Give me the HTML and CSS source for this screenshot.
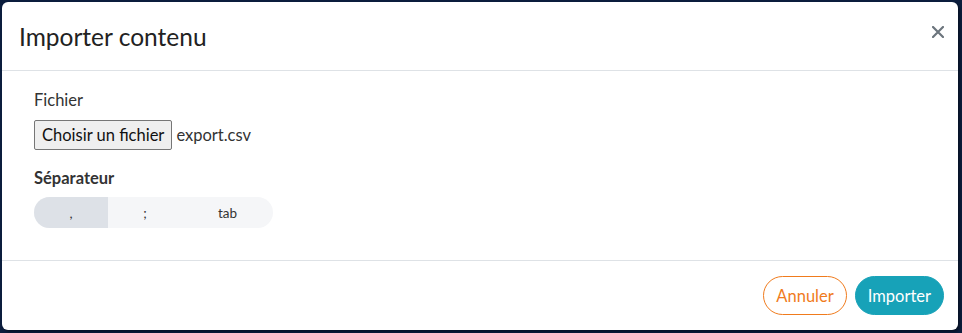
FILE: index.html
```html
<!DOCTYPE html>
<html lang="fr">
<head>
    <meta charset="UTF-8">
    <meta name="viewport" content="width=device-width, initial-scale=1.0">
    <title>Importer contenu</title>
    <link rel="stylesheet" href="styles.css">
</head>
<body>
    <div class="backdrop">
        <div class="modal">
            <div class="modal-header">
                <h2>Importer contenu</h2>
                <button type="button" class="close" aria-label="Fermer">
                    <svg width="12" height="12" viewBox="0 0 12 12">
                        <path d="M1 1 L11 11 M11 1 L1 11" stroke="#6c757d" stroke-width="2.2" stroke-linecap="round"/>
                    </svg>
                </button>
            </div>
            <div class="modal-body">
                <label class="field-label">Fichier</label>
                <div class="file-row">
                    <span class="file-button">Choisir un fichier</span>
                    <span class="file-name">export.csv</span>
                </div>
                <div class="section-label">Séparateur</div>
                <div class="segments">
                    <button type="button" class="segment active">,</button>
                    <button type="button" class="segment">;</button>
                    <button type="button" class="segment wide">tab</button>
                </div>
            </div>
            <div class="modal-footer">
                <button type="button" class="btn btn-outline">Annuler</button>
                <button type="button" class="btn btn-primary">Importer</button>
            </div>
        </div>
    </div>
</body>
</html>
```

FILE: styles.css
```css
body {
    margin: 0;
    padding: 0;
    font-family: "Lato", "Open Sans", sans-serif;
    background-color: #0b1d3d;
    color: #333;
}

.backdrop {
    padding: 2px 4px 3px 2px;
}

.modal {
    background-color: white;
    border-radius: 6px;
    display: flex;
    flex-direction: column;
    box-shadow: 2px 2px 3px rgba(0, 0, 0, 0.4);
}

.modal-header {
    display: flex;
    justify-content: space-between;
    align-items: center;
    height: 68px;
    padding: 0 14px 0 17px;
    border-bottom: 1px solid #dee2e6;
}

.modal-header h2 {
    margin: 0;
    font-size: 24.5px;
    font-weight: 400;
    color: #222;
}

.close {
    align-self: flex-start;
    margin-top: 24px;
    border: none;
    background: none;
    padding: 0;
    width: 12px;
    height: 12px;
    cursor: pointer;
}

.close svg {
    display: block;
}

.modal-body {
    height: 189px;
    box-sizing: border-box;
    padding: 19px 32px;
}

.field-label {
    display: block;
    font-size: 16.5px;
    margin-bottom: 10px;
}

.file-row {
    display: flex;
    align-items: center;
    gap: 4px;
    font-size: 16.5px;
}

.file-button {
    border: 1px solid #767676;
    border-radius: 2px;
    background-color: #efefef;
    padding: 4px 7px;
    color: #111;
}

.section-label {
    font-weight: 700;
    font-size: 16.5px;
    margin: 18px 0 9px;
}

.segments {
    display: inline-flex;
    border-radius: 16px;
    overflow: hidden;
    background-color: #f5f6f8;
}

.segment {
    border: none;
    background: none;
    width: 74px;
    height: 31px;
    font-family: inherit;
    font-size: 13.5px;
    color: #333;
    padding: 0;
}

.segment.wide {
    width: 91px;
}

.segment.active {
    background-color: #dde1e7;
}

.modal-footer {
    display: flex;
    justify-content: flex-end;
    align-items: center;
    gap: 8px;
    height: 69px;
    padding: 0 14px;
    border-top: 1px solid #dee2e6;
}

.btn {
    font-family: inherit;
    font-size: 16.5px;
    height: 39px;
    padding: 0 12px;
    border-radius: 20px;
    cursor: pointer;
}

.btn-outline {
    background: white;
    border: 1px solid #f07b1d;
    color: #f07b1d;
}

.btn-primary {
    background-color: #17a2b8;
    border: 1px solid #17a2b8;
    color: white;
}
```
